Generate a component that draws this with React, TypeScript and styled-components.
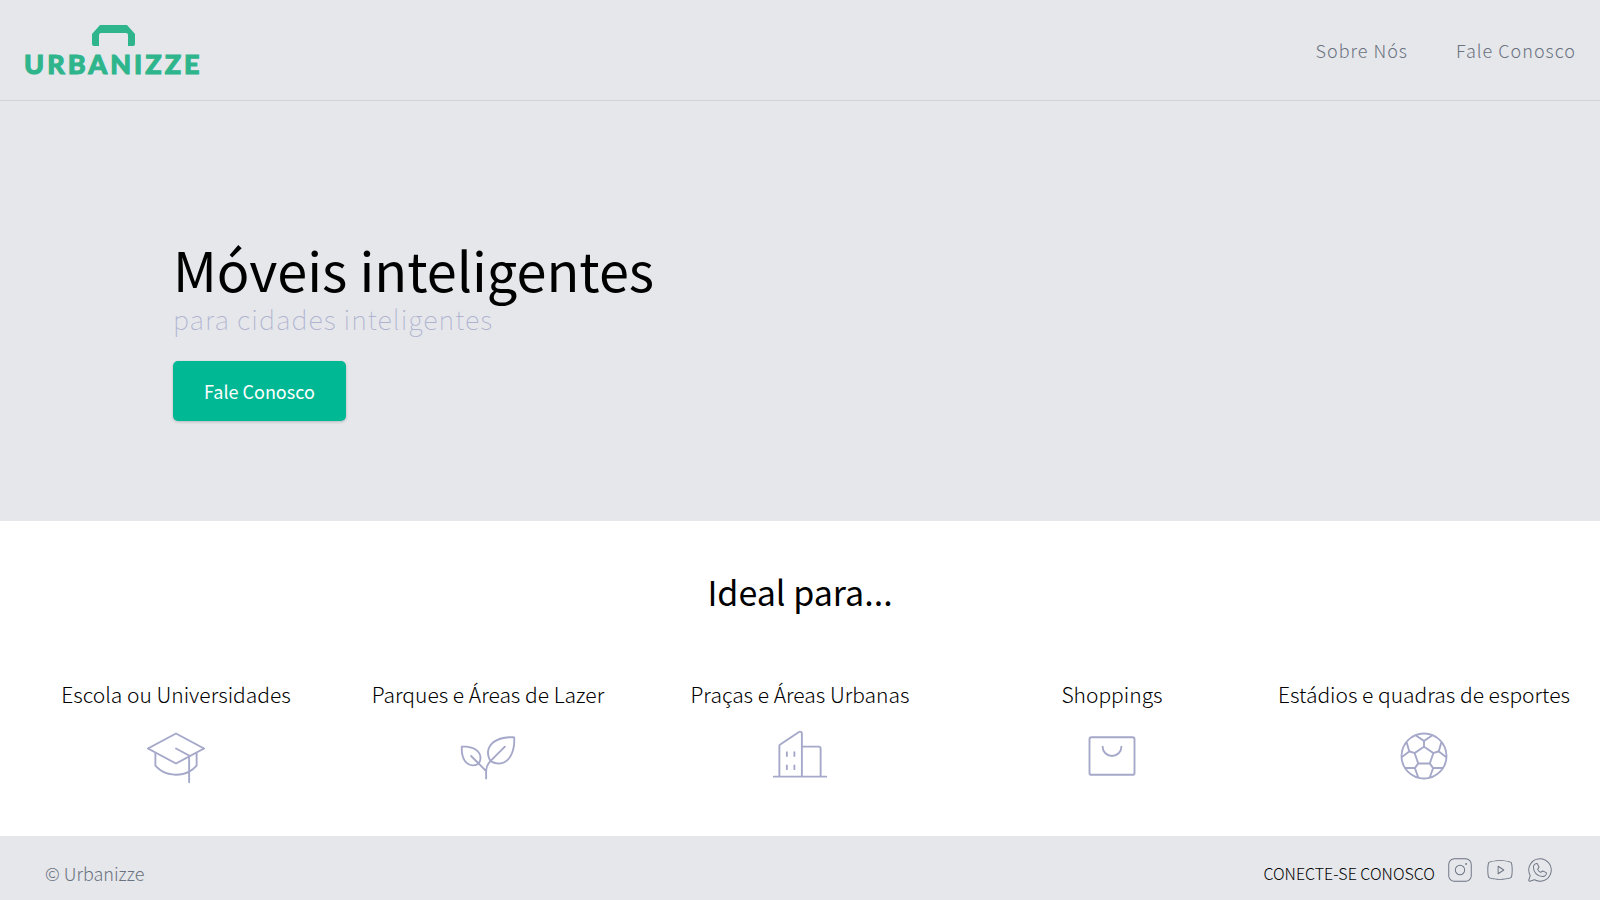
import React from "react";
import styled, { createGlobalStyle } from "styled-components";
import {
  PiBuildingsThin,
  PiGraduationCapThin,
  PiInstagramLogoThin,
  PiPlantThin,
  PiSoccerBallThin,
  PiWhatsappLogoThin,
  PiYoutubeLogoThin,
} from "react-icons/pi";

const GlobalStyle = createGlobalStyle`
  * { box-sizing: border-box; }
  body {
    margin: 0;
    background: #fff;
    color: #000;
    font-family: "Noto Sans CJK JP", "Noto Sans", sans-serif;
  }
  h1, h2, h3, p, ul { margin: 0; padding: 0; font-weight: 400; }
  ul { list-style: none; }
  a { color: inherit; text-decoration: none; }
`;

const Page = styled.div`
  display: flex;
  flex-direction: column;
  min-height: 100vh;
`;

const Header = styled.header`
  display: flex;
  align-items: center;
  justify-content: space-between;
  padding: 25px 24px 23px;
  background: #e5e7eb;
  border-bottom: 1px solid #d1d3d7;
`;

const Logo = styled.a`
  display: flex;
  flex-direction: column;
  align-items: center;
  gap: 5px;
  color: #2fb58c;
`;

const LogoWord = styled.span`
  font: 900 27px/26px Lato, sans-serif;
  letter-spacing: 3px;
  -webkit-text-stroke: 1px currentColor;
`;

const Nav = styled.nav`
  display: flex;
  gap: 48px;
  padding-bottom: 3px;
  color: #6b7280;
  font-size: 18px;
  line-height: 28px;
  font-weight: 300;
  letter-spacing: 1px;
`;

const Hero = styled.section`
  display: flex;
  flex-direction: column;
  align-items: flex-start;
  padding: 136px 173px 100px;
  background: #e5e7eb;
`;

const HeroTitle = styled.h1`
  font-size: 54px;
  line-height: 64px;
`;

const HeroSubtitle = styled.p`
  color: #b0b3d0;
  font-size: 27px;
  line-height: 36px;
  font-weight: 100;
  letter-spacing: 1px;
`;

const ContactButton = styled.button`
  margin-top: 24px;
  padding: 16px 31px;
  border: 0;
  border-radius: 5px;
  background: #00b894;
  box-shadow: 0 1px 3px rgba(0, 0, 0, 0.2);
  color: #fff;
  font-family: inherit;
  font-size: 18px;
  line-height: 28px;
`;

const Ideal = styled.section`
  padding: 51px 20px 50px;
  text-align: center;
`;

const SectionTitle = styled.h2`
  font-size: 34px;
  line-height: 40px;
`;

const Places = styled.ul`
  display: grid;
  grid-template-columns: repeat(5, minmax(0, 1fr));
  margin-top: 64px;
`;

const Place = styled.li`
  display: flex;
  flex-direction: column;
  align-items: center;
  gap: 14px;
  svg { color: #a5a8c9; }
`;

const PlaceName = styled.h3`
  font-size: 21px;
  line-height: 36px;
  font-weight: 300;
  white-space: nowrap;
`;

const Footer = styled.footer`
  display: flex;
  flex: 1;
  align-items: flex-end;
  justify-content: space-between;
  padding: 18px 45px 15px;
  background: #e5e7eb;
  font-weight: 300;
`;

const Copyright = styled.p`
  color: #6b7280;
  font-size: 18px;
  line-height: 24px;
  font-weight: 300;
`;

const Social = styled.div`
  display: flex;
  align-items: flex-end;
  gap: 10px;
  color: #6b7280;
`;

const SocialLabel = styled.span`
  color: #000;
  font-size: 16px;
  line-height: 24px;
`;

const SocialLink = styled.a`
  display: flex;
`;

function ShoppingBag({ size }: { size: number }) {
  return (
    <svg
      width={size}
      height={size}
      viewBox="0 0 256 256"
      fill="none"
      stroke="currentColor"
      strokeWidth="8"
      strokeLinecap="round"
      strokeLinejoin="round"
      aria-hidden="true"
    >
      <rect x="32" y="48" width="192" height="160" rx="8" />
      <path d="M168 88a40 40 0 0 1-80 0" />
    </svg>
  );
}

const places = [
  { name: "Escola ou Universidades", Icon: PiGraduationCapThin },
  { name: "Parques e Áreas de Lazer", Icon: PiPlantThin },
  { name: "Praças e Áreas Urbanas", Icon: PiBuildingsThin },
  { name: "Shoppings", Icon: ShoppingBag },
  { name: "Estádios e quadras de esportes", Icon: PiSoccerBallThin },
];

const networks = [
  { name: "Instagram", Icon: PiInstagramLogoThin },
  { name: "YouTube", Icon: PiYoutubeLogoThin },
  { name: "WhatsApp", Icon: PiWhatsappLogoThin },
];

export default function App() {
  return (
    <Page>
      <GlobalStyle />
      <Header>
        <Logo href="#">
          <svg width="43" height="21" viewBox="0 0 43 21" fill="currentColor" aria-hidden="true">
            <path d="M8 0H35L43 9V19Q43 21 41 21H36V10Q36 8 34 8H9Q7 8 7 10V21H2Q0 21 0 19V9Z" />
          </svg>
          <LogoWord>URBANIZZE</LogoWord>
        </Logo>
        <Nav>
          <a href="#sobre">Sobre Nós</a>
          <a href="#contato">Fale Conosco</a>
        </Nav>
      </Header>
      <main>
        <Hero>
          <HeroTitle>Móveis inteligentes</HeroTitle>
          <HeroSubtitle>para cidades inteligentes</HeroSubtitle>
          <ContactButton type="button">Fale Conosco</ContactButton>
        </Hero>
        <Ideal>
          <SectionTitle>Ideal para...</SectionTitle>
          <Places>
            {places.map(({ name, Icon }) => (
              <Place key={name}>
                <PlaceName>{name}</PlaceName>
                <Icon size={60} />
              </Place>
            ))}
          </Places>
        </Ideal>
      </main>
      <Footer>
        <Copyright>© Urbanizze</Copyright>
        <Social>
          <SocialLabel>CONECTE-SE CONOSCO</SocialLabel>
          {networks.map(({ name, Icon }) => (
            <SocialLink key={name} href="#" aria-label={name}>
              <Icon size={30} />
            </SocialLink>
          ))}
        </Social>
      </Footer>
    </Page>
  );
}
